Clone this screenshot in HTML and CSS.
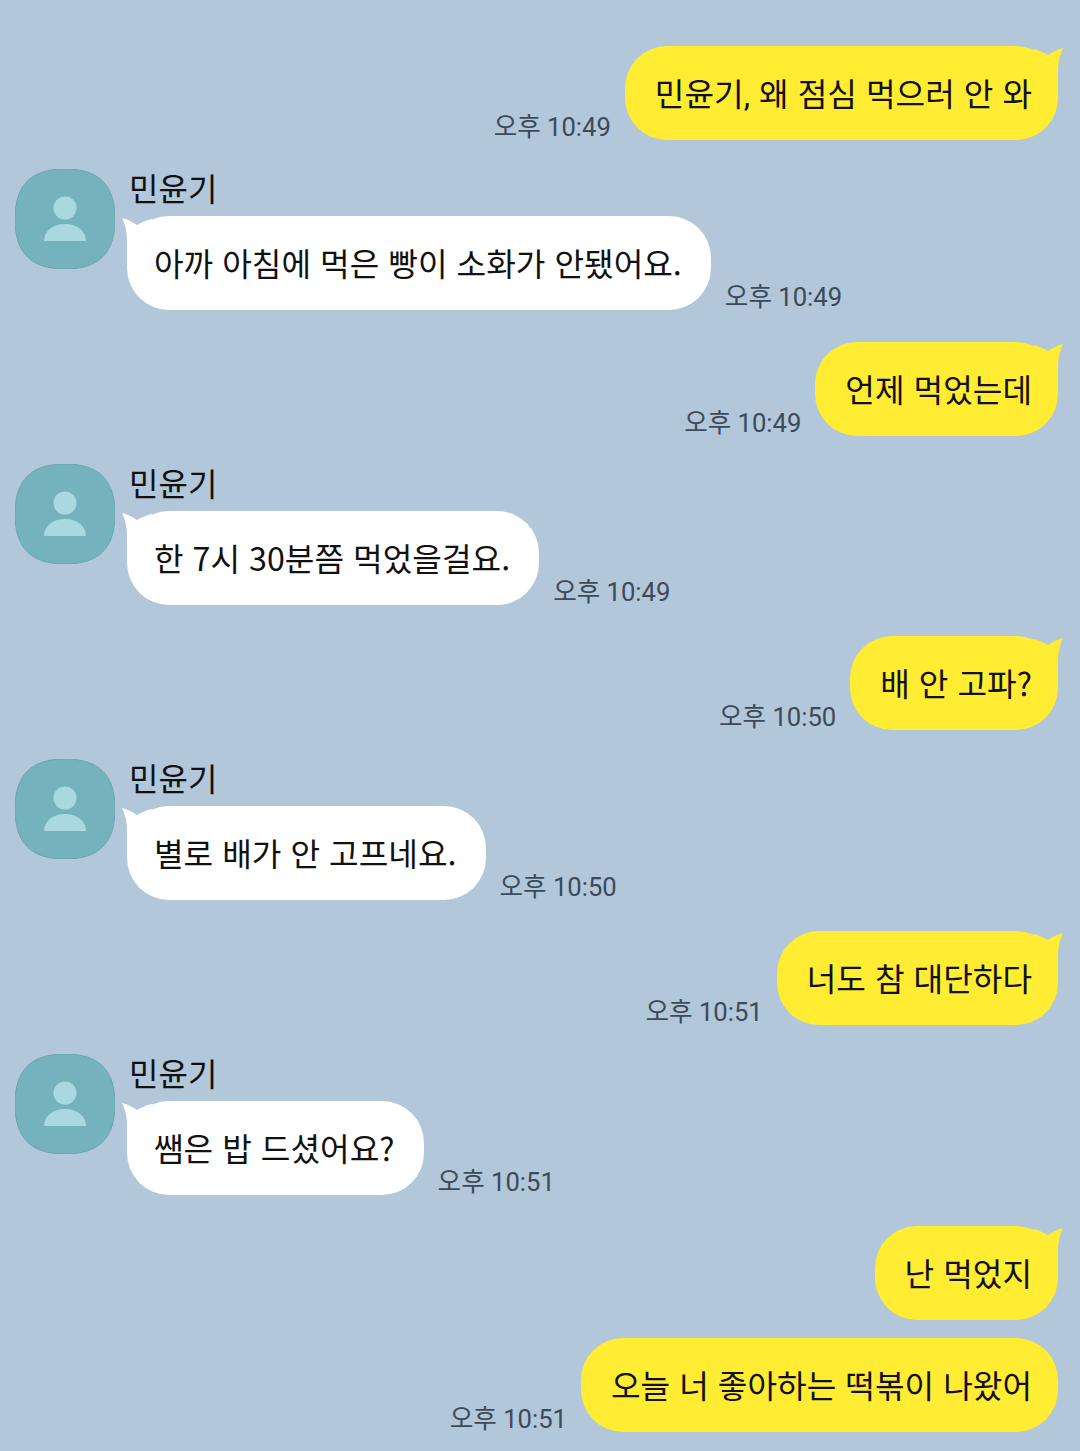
FILE: index.html
```html
<!DOCTYPE html>
<html lang="ko">
<head>
  <meta charset="UTF-8">
  <title>민윤기</title>
  <link rel="stylesheet" href="styles.css">
</head>
<body>
  <svg class="defs" width="0" height="0">
    <symbol id="avatar" viewBox="0 0 100 100">
      <path d="M50 0C84 0 100 16 100 50C100 84 84 100 50 100C16 100 0 84 0 50C0 16 16 0 50 0Z" fill="#74b3be" stroke="#6aa5b2" stroke-width="1"/>
      <circle cx="50" cy="39" r="11.5" fill="#aad8e0"/>
      <path d="M29 72C29 62 38 55 50 55C62 55 71 62 71 72Z" fill="#aad8e0"/>
    </symbol>
    <symbol id="tail-left" viewBox="0 0 30 40">
      <path d="M0 0C4 1 11 4 15 7C19 5 24 2 30 1L30 40L5 40L5 22C5 14 3 6 0 0Z" fill="#fff"/>
    </symbol>
    <symbol id="tail-right" viewBox="0 0 30 40">
      <path d="M30 0C26 1 19 4 15 7C11 5 6 2 0 1L0 40L25 40L25 22C25 14 27 6 30 0Z" fill="#ffec33"/>
    </symbol>
  </svg>

  <main class="chat">
    <div class="row sent">
      <span class="time">오후 10:49</span>
      <div class="bubble">민윤기<span class="comma">,</span> 왜 점심 먹으러 안 와<svg class="tail"><use href="#tail-right"/></svg></div>
    </div>

    <div class="row received">
      <svg class="avatar"><use href="#avatar"/></svg>
      <div class="msg">
        <div class="name">민윤기</div>
        <div class="line">
          <div class="bubble">아까 아침에 먹은 빵이 소화가 안됐어요.<svg class="tail"><use href="#tail-left"/></svg></div>
          <span class="time">오후 10:49</span>
        </div>
      </div>
    </div>

    <div class="row sent wide-gap">
      <span class="time">오후 10:49</span>
      <div class="bubble">언제 먹었는데<svg class="tail"><use href="#tail-right"/></svg></div>
    </div>

    <div class="row received narrow-gap">
      <svg class="avatar"><use href="#avatar"/></svg>
      <div class="msg">
        <div class="name">민윤기</div>
        <div class="line">
          <div class="bubble">한 7시 30분쯤 먹었을걸요.<svg class="tail"><use href="#tail-left"/></svg></div>
          <span class="time">오후 10:49</span>
        </div>
      </div>
    </div>

    <div class="row sent">
      <span class="time">오후 10:50</span>
      <div class="bubble">배 안 고파?<svg class="tail"><use href="#tail-right"/></svg></div>
    </div>

    <div class="row received">
      <svg class="avatar"><use href="#avatar"/></svg>
      <div class="msg">
        <div class="name">민윤기</div>
        <div class="line">
          <div class="bubble">별로 배가 안 고프네요.<svg class="tail"><use href="#tail-left"/></svg></div>
          <span class="time">오후 10:50</span>
        </div>
      </div>
    </div>

    <div class="row sent">
      <span class="time">오후 10:51</span>
      <div class="bubble">너도 참 대단하다<svg class="tail"><use href="#tail-right"/></svg></div>
    </div>

    <div class="row received">
      <svg class="avatar"><use href="#avatar"/></svg>
      <div class="msg">
        <div class="name">민윤기</div>
        <div class="line">
          <div class="bubble">쌤은 밥 드셨어요?<svg class="tail"><use href="#tail-left"/></svg></div>
          <span class="time">오후 10:51</span>
        </div>
      </div>
    </div>

    <div class="row sent">
      <div class="bubble">난 먹었지<svg class="tail"><use href="#tail-right"/></svg></div>
    </div>

    <div class="row sent same-sender">
      <span class="time">오후 10:51</span>
      <div class="bubble">오늘 너 좋아하는 떡볶이 나왔어</div>
    </div>
  </main>
</body>
</html>
```

FILE: styles.css
```css
* {
  box-sizing: border-box;
}
html, body {
  margin: 0;
  background-color: #b2c7da;
}
body {
  height: 1451px;
  overflow: hidden;
  font-family: "Noto Sans CJK KR", "Noto Sans", sans-serif;
  color: #111;
}
.defs {
  display: block;
}
.chat {
  display: flex;
  flex-direction: column;
  padding: 46px 22px 0 15px;
}
.row {
  display: flex;
  margin-top: 31px;
}
.row:first-child {
  margin-top: 0;
}
.sent {
  justify-content: flex-end;
  align-items: flex-end;
  gap: 14px;
}
.received {
  margin-top: 29px;
  gap: 12px;
}
.wide-gap {
  margin-top: 32px;
}
.narrow-gap {
  margin-top: 28px;
}
.same-sender {
  margin-top: 18px;
}
.avatar {
  width: 100px;
  height: 100px;
  flex: none;
}
.name {
  height: 47px;
  padding-left: 2px;
  font-size: 32px;
  line-height: 36px;
}
.line {
  display: flex;
  align-items: flex-end;
  gap: 14px;
}
.bubble {
  position: relative;
  height: 94px;
  padding: 0 26px 0 30px;
  border-radius: 42px;
  background-color: #ffec33;
  font-size: 32.2px;
  line-height: 92px;
  white-space: nowrap;
}
.comma {
  font-family: Roboto, sans-serif;
}
.received .bubble {
  padding: 0 29px 0 27px;
  background-color: #fff;
}
.tail {
  position: absolute;
  top: 2px;
  right: -5px;
  width: 30px;
  height: 40px;
}
.received .tail {
  right: auto;
  left: -5px;
}
.time {
  font-family: Roboto, "Noto Sans CJK KR", sans-serif;
  font-size: 25.6px;
  line-height: 26px;
  color: #3c4a59;
  white-space: nowrap;
}
```
